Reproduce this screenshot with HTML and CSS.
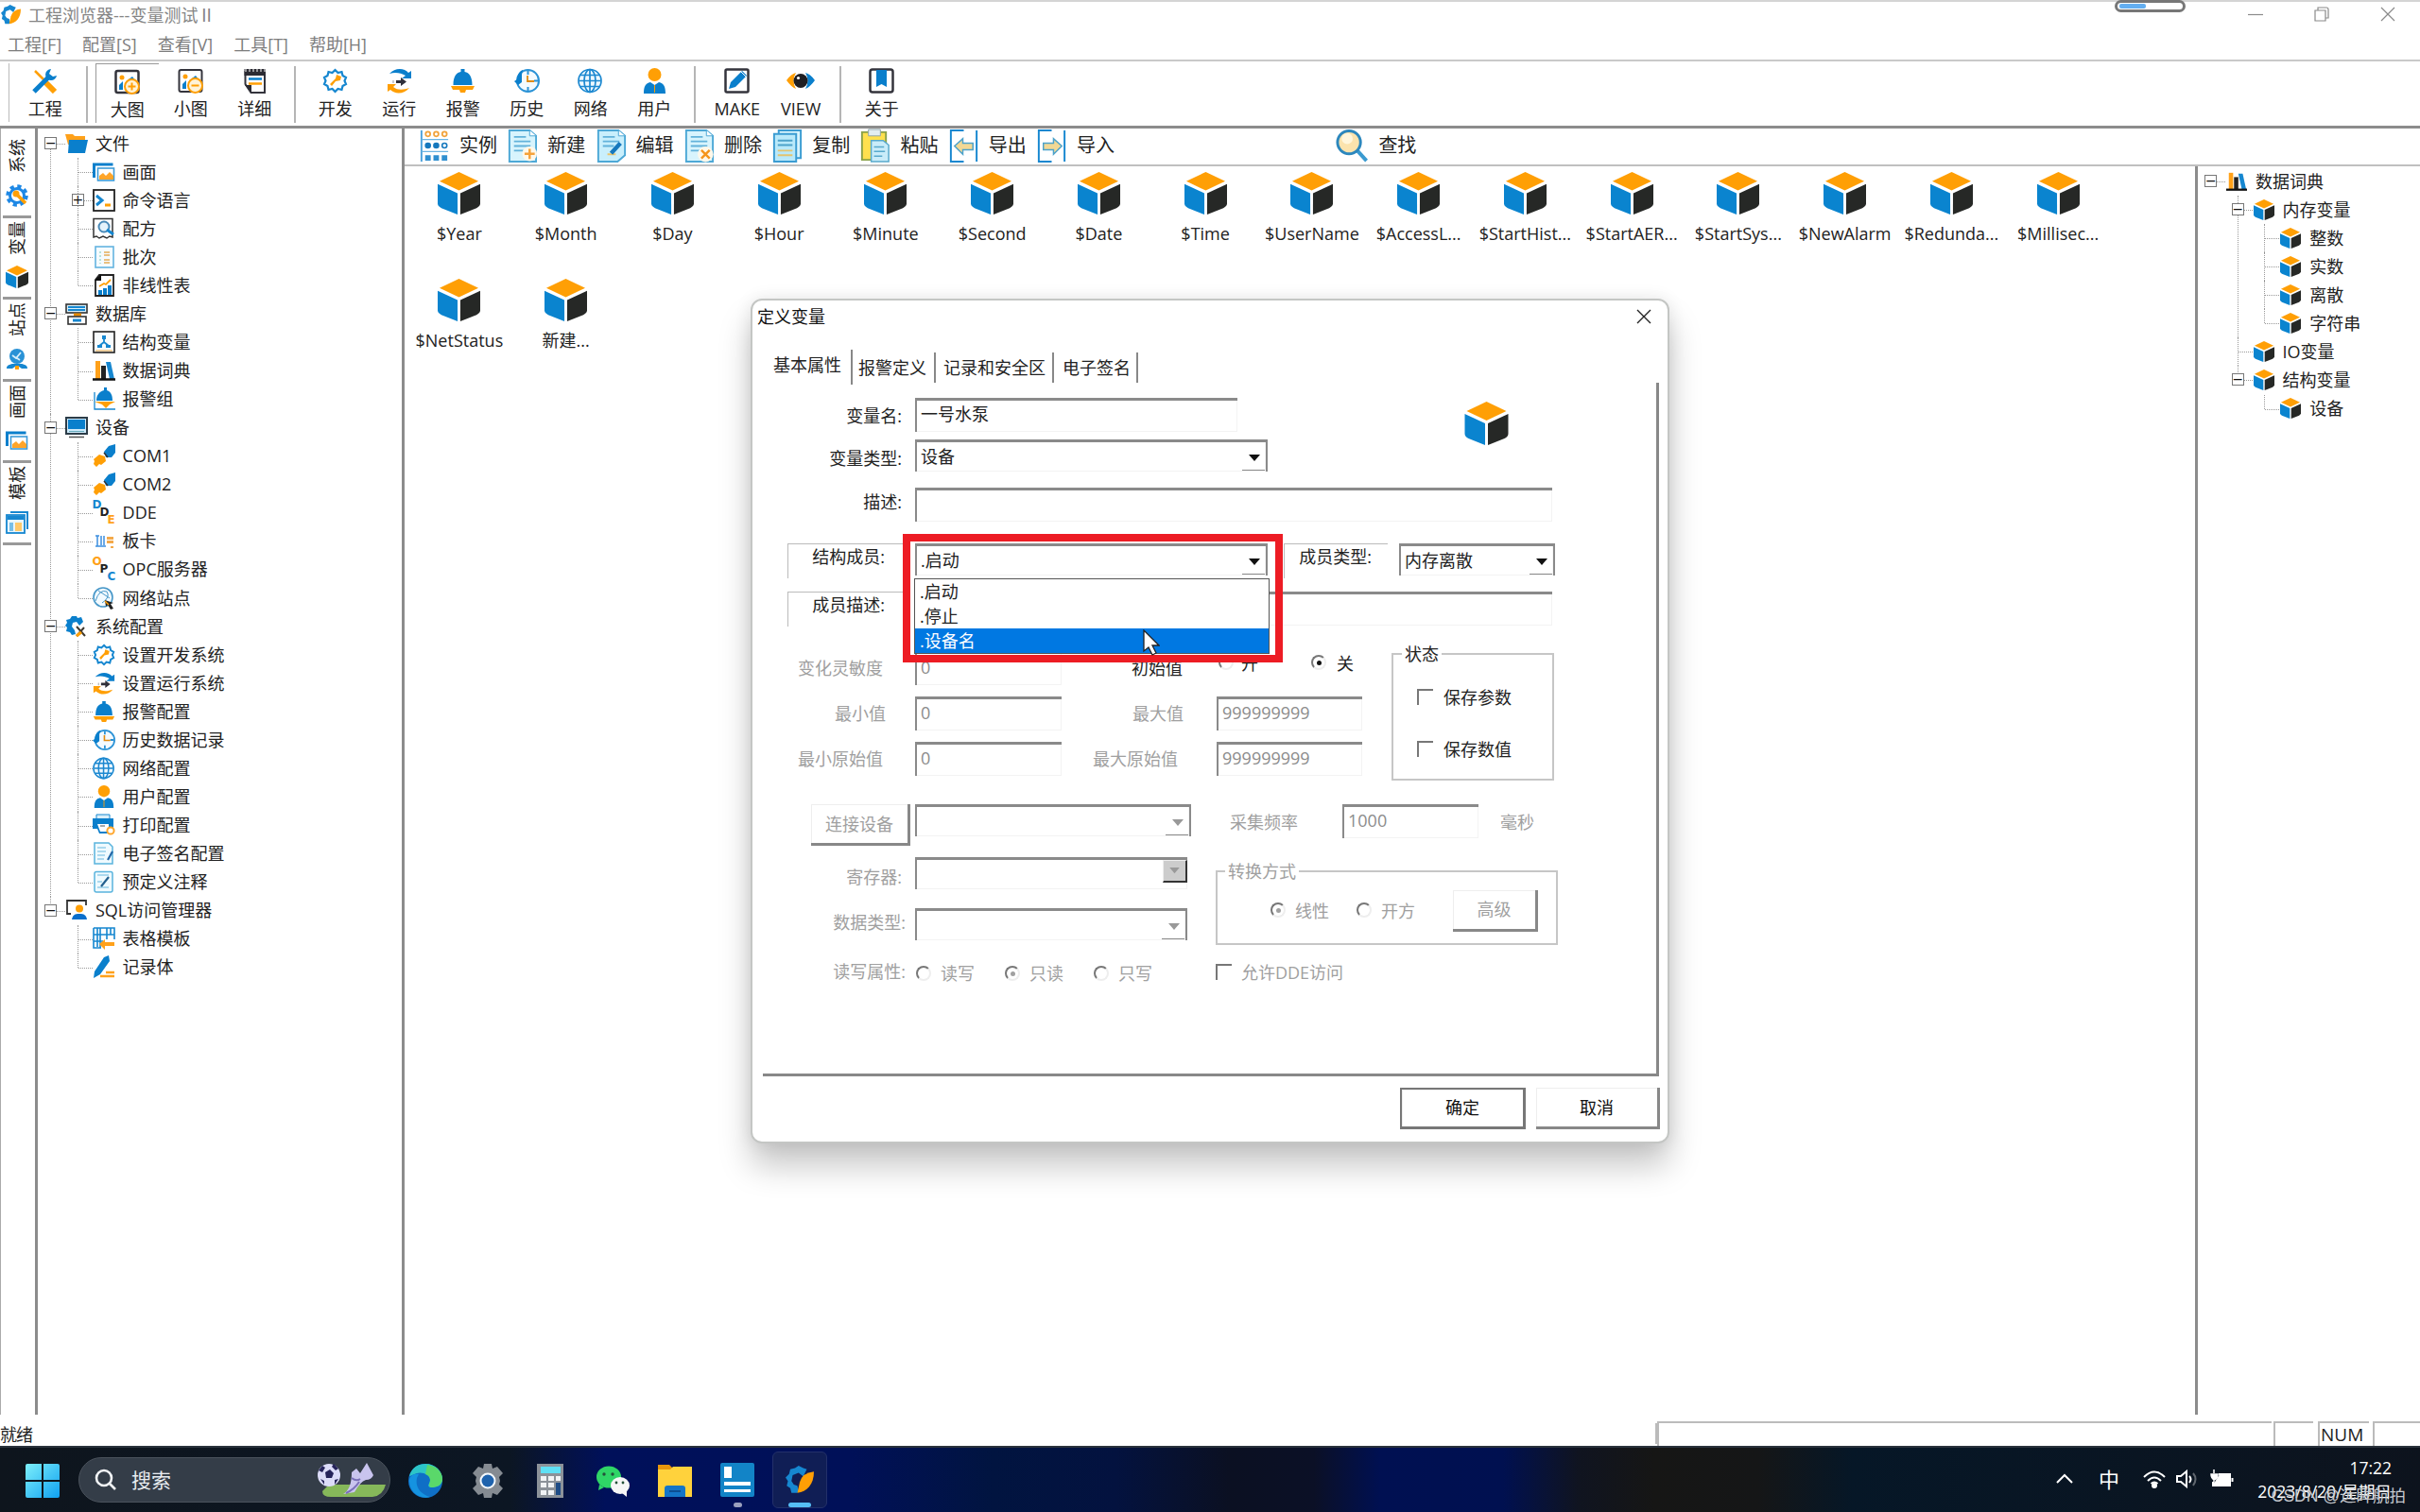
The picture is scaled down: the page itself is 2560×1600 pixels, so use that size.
FILE: index.html
```html
<!DOCTYPE html>
<html lang="zh-CN">
<head>
<meta charset="utf-8">
<title>工程浏览器---变量测试II</title>
<link rel="stylesheet" href="styles.css">
</head>
<body>
<svg class="defs" aria-hidden="true">
  <symbol id="cube" viewBox="0 0 46 46"><path fill="#fff" d="M23 0 46 11V36L23 46 0 36V11Z"/><path fill="#ff9f05" d="M23 0 44 10 23 20 2 10Z"/><path fill="#0a84cf" d="M0 13 21.500 23V46L4 39Q0 37 0 34Z"/><path fill="#262826" d="M46 13 24.500 23V46L42 39Q46 37 46 34Z"/></symbol>
  <symbol id="tools" viewBox="0 0 27 27"><path d="M3 3 13 13" stroke="#ff9f05" stroke-width="2.500"/><path d="M14 15 24 25" stroke="#ff9f05" stroke-width="6"/><path d="M2 25 18 9" stroke="#0a7fcc" stroke-width="5"/><path d="M20 1A6 6 0 1 0 26 8L22 9 18 6Z" fill="#0a7fcc"/></symbol>
  <symbol id="picplus" viewBox="0 0 27 27"><rect x="1.500" y="2" width="24" height="23" rx="2" fill="#fff" stroke="#34343c" stroke-width="2.500"/><circle cx="8" cy="9" r="2.500" fill="#ff9f05"/><path d="M5 22v-5l4-4v9zm10-11 4-3 3 4z" fill="#0a7fcc"/><circle cx="18.500" cy="18.500" r="7.500" fill="#fff3d8" stroke="#ff9f05" stroke-width="2"/><path d="M18.500 14.500v8M14.500 18.500h8" stroke="#ff9f05" stroke-width="2"/></symbol>
  <symbol id="picminus" viewBox="0 0 27 27"><rect x="1.500" y="2" width="24" height="23" rx="2" fill="#fff" stroke="#34343c" stroke-width="2"/><circle cx="8" cy="9" r="2.500" fill="#ff9f05"/><path d="M5 22v-5l4-4v9zm10-11 4-3 3 4z" fill="#0a7fcc"/><circle cx="18.500" cy="18.500" r="7.500" fill="#fff3d8" stroke="#ff9f05" stroke-width="2"/><path d="M14.500 18.500h8" stroke="#ff9f05" stroke-width="2"/></symbol>
  <symbol id="note" viewBox="0 0 27 27"><path d="M3.500 4v13l6 9H24V4z" fill="#fff" stroke="#34343c" stroke-width="2"/><path d="M2.500 1H25v7H2.500zM3 18h7v8z" fill="#2b2b33"/><path d="M4 1v3M8 1v3M12 1v3M16 1v3M20 1v3M24 1v3" stroke="#fff"/><path d="M7 11.500h14" stroke="#0a7fcc" stroke-width="2.500"/><path d="M7 16.500h14" stroke="#ff9f05" stroke-width="2.500"/></symbol>
  <symbol id="gear" viewBox="0 0 27 27"><path d="M13.500 2l3 3 4-1 1 4 3.500 2-1.500 3.500 1.500 3.500-3.500 2-1 4-4-1-3 3-3-3-4 1-1-4L2 17l1.500-3.500L2 10l3.500-2 1-4 4 1z" fill="#fff" stroke="#1687d0" stroke-width="2.200"/><path d="M8 17l6-6 1-4 5 2-1 4-5 1-4 5z" fill="#ff9f05"/></symbol>
  <symbol id="run" viewBox="0 0 27 27"><path d="M3 6C9 -1 19 0 23 5l3-2v8H16l4-3C15 5 9 4 3 6z" fill="#0a7fcc"/><path d="M24 21C18 28 9 28 4 23l-3 2v-8h9l-3 3c5 4 11 3 17 1z" fill="#ff9f05"/><path d="M10 13h5v-3l6 4.500-6 4.500v-3h-5z" fill="#30303a"/><path d="M7 13v3" stroke="#999"/></symbol>
  <symbol id="bell" viewBox="0 0 27 27"><path d="M11.500 4V1h4v3c5 1 8 5 8 14h-20c0-9 3-13 8-14z" fill="#0a7fcc"/><path d="M1 19h25l-2 4h-7l-1 3h-5l-1-3H3z" fill="#ff9f05"/></symbol>
  <symbol id="clock" viewBox="0 0 27 27"><circle cx="14.500" cy="13.500" r="11.500" fill="#f4faff" stroke="#2a92d6" stroke-width="2"/><path d="M14.500 3v4m0 13v4M21 13.500h4" stroke="#2a92d6" stroke-width="2"/><path d="M14 8v6h7" fill="none" stroke="#e08a10" stroke-width="1.800"/><path d="M0 14l3-2C3 7 6 3 9 2l-1 5v8l-4 3z" fill="#0a7fcc"/></symbol>
  <symbol id="globe" viewBox="0 0 27 27"><g fill="none" stroke="#1c88d0" stroke-width="1.700"><circle cx="13" cy="13.500" r="12" fill="#eef8ff"/><ellipse cx="13" cy="13.500" rx="6" ry="12"/><path d="M13 1v25M1.500 13.500h23M3 7.500h20M3 19.500h20"/></g></symbol>
  <symbol id="user" viewBox="0 0 27 27"><circle cx="13.500" cy="7" r="7" fill="#ff9f05"/><path d="M2 27c0-8 2-11 7-12l4.500 3 4.500-3c5 1 7 4 7 12z" fill="#0a7fcc"/><path d="M13.500 18v8" stroke="#ff9f05"/></symbol>
  <symbol id="make" viewBox="0 0 27 27"><rect x="1.500" y="1.500" width="24" height="24" rx="1.500" fill="#fff" stroke="#34343c" stroke-width="2.500"/><path d="M5 22l2-7L19 3l5 5-12 12z" fill="#0a7fcc"/><path d="M18 4l5 5" stroke="#fff"/></symbol>
  <symbol id="eye" viewBox="0 0 30 27"><path d="M0 13Q5 6 10 5 5 13 10 22 5 20 0 13z" fill="#ff9f05"/><path d="M30 13Q25 6 20 5q5 8 0 17 5-2 10-9z" fill="#0a7fcc"/><circle cx="15" cy="13.500" r="7.500" fill="#1e1e22"/><circle cx="12.500" cy="10.500" r="1.600" fill="#fff"/></symbol>
  <symbol id="about" viewBox="0 0 27 27"><rect x="1.500" y="1.500" width="24" height="24" rx="2.500" fill="#fff" stroke="#34343c" stroke-width="2.500"/><path d="M8 2h11v18l-5.500-3L8 20z" fill="#0a7fcc"/></symbol>
  <symbol id="folder" viewBox="0 0 24 24"><path d="M0 2h8l2 2h11v9H3z" fill="#ffa11a"/><path d="M4 8h20l-3 14H3z" fill="#0a7fcc"/></symbol>
  <symbol id="pics" viewBox="0 0 24 24"><path d="M1.500 18V4h20" fill="none" stroke="#0a7fcc" stroke-width="3"/><rect x="5.500" y="8" width="17" height="13" fill="#fff" stroke="#3c9bd8" stroke-width="1.600"/><path d="M7 20v-4l4-3 3 3 4-4 4 4v4z" fill="#ffa52a"/></symbol>
  <symbol id="cmd" viewBox="0 0 24 24"><rect x="1" y="1" width="22" height="22" fill="#fff" stroke="#222" stroke-width="1.800"/><path d="M4 7l6 5-6 5" fill="none" stroke="#1687d0" stroke-width="3"/><path d="M13 17h6" stroke="#ff9f05" stroke-width="3"/></symbol>
  <symbol id="recipe" viewBox="0 0 24 24"><path d="M1 1.500h20V21l-3-1-3 2-4-2-4 2-3-2-3 1z" fill="#fff" stroke="#333" stroke-width="1.500"/><circle cx="12" cy="10" r="5.500" fill="#e4f2fb" stroke="#4a8ab8" stroke-width="2"/><path d="M15 13l7 5" stroke="#1687d0" stroke-width="3"/></symbol>
  <symbol id="batch" viewBox="0 0 24 24"><rect x="3" y="1" width="19" height="22" fill="#f5fbff" stroke="#64b4e0" stroke-width="1.600"/><path d="M12 7h6M12 10h6M12 15h6M12 18h6" stroke="#e9c080" stroke-width="2"/><path d="M8 6v13" stroke="#7cb" stroke-dasharray="2 2"/></symbol>
  <symbol id="chart" viewBox="0 0 24 24"><path d="M7 1h15v22H3V6z" fill="#fff" stroke="#222" stroke-width="1.800"/><path d="M2 7l7-7v7z" fill="#111"/><path d="M6 22v-5h4v5zm5 0v-7h4v7zm5 0V12h4v10z" fill="#0a7fcc"/><path d="M7 13l5-3 2 1 5-5" fill="none" stroke="#ff9f05" stroke-width="1.800"/></symbol>
  <symbol id="db" viewBox="0 0 24 24"><rect x="1" y="2" width="22" height="9" fill="#d9f0fb" stroke="#333" stroke-width="1.600"/><path d="M3 5h18M3 8h18" stroke="#1687d0" stroke-width="2"/><path d="M9 13h8" stroke="#e58a00" stroke-width="3"/><rect x="3" y="15" width="19" height="8" fill="#fff" stroke="#333" stroke-width="1.600"/><path d="M8 19h9" stroke="#1687d0" stroke-width="3"/></symbol>
  <symbol id="struct" viewBox="0 0 24 24"><rect x="1" y="1" width="22" height="22" fill="#f7fbfd" stroke="#222" stroke-width="1.600"/><path d="M12 6v7M12 12l-5 4M12 12l5 4" stroke="#1687d0" stroke-width="1.800"/><path d="M10 5h4v4h-4zM5 15h5v3H5zm9 0h5v3h-5z" fill="#1687d0"/><path d="M3 21h18" stroke="#e8a542"/></symbol>
  <symbol id="books" viewBox="0 0 24 24"><path d="M3 2h5v19H3z" fill="#ffa11a"/><path d="M9 7h5v14H9z" fill="#222"/><path d="M14 3h5l4 18h-5z" fill="#1687d0"/><path d="M0 21.500h24" stroke="#111" stroke-width="2.500"/></symbol>
  <symbol id="bellgrp" viewBox="0 0 24 24"><path d="M2 5v18h22" fill="none" stroke="#1687d0" stroke-width="1.300"/><path d="M12 0h3v3c5 2 6 6 6 11H4C4 9 6 5 12 3z" fill="#0a7fcc"/><path d="M2 15h22l-6 3-4 4-4-4z" fill="#ff9f05"/></symbol>
  <symbol id="monitor" viewBox="0 0 24 24"><rect x="1" y="2" width="22" height="17" fill="#cfeafa" stroke="#2c3c48" stroke-width="2"/><path d="M3 4h18v10H3z" fill="#0a7fcc"/><path d="M4 16.500h16" stroke="#6ab" /><path d="M4 22.500h16" stroke="#555" stroke-width="1.500"/></symbol>
  <symbol id="com" viewBox="0 0 24 24"><path d="M12 8l5-6 7-2v9l-4 5-6 0z" fill="#0a7fcc"/><path d="M1 16l6-5 6 2 1 5-5 4-2-1-3 3-3-3 1-3z" fill="#ff9f05"/><path d="M12 9l4 5" stroke="#333" stroke-width="1.500"/></symbol>
  <symbol id="card" viewBox="0 0 24 24"><path d="M3 7h4M5 7v11M9 7v10M12 7v10M3 18h11" stroke="#3d8fe0" stroke-width="1.500"/><path d="M15 8h7v3h-7zM15 12h7v3h-7zM19 18h3v2h-3z" fill="#f4a94a"/></symbol>
  <symbol id="site" viewBox="0 0 24 24"><circle cx="11" cy="11" r="10" fill="#f2faff" stroke="#4797c8" stroke-width="1.600"/><path d="M3 15Q7 2 15 5q4 6-5 12M6 4l12 8" fill="none" stroke="#4797c8"/><path d="M13 14l9 3-3 1 3 5-3 1-3-5-2 2z" fill="#222"/><path d="M13 15l4 4" stroke="#ff9f05" stroke-width="1.500"/></symbol>
  <symbol id="syscfg" viewBox="0 0 24 24"><path d="M7 1h5l1 2 4-1 2 5-2 2-2 2-3-4-4 1-1 4 3 4 1 4-4 1-2-3-4-1 1-4-2-2 2-3-1-3 4-1z" fill="#0a7fcc"/><path d="M12 12l9 10M20 13l-8 9" stroke="#403a30" stroke-width="2"/><path d="M17 18l-5 4" stroke="#ff9f05" stroke-width="3"/></symbol>
  <symbol id="printer" viewBox="0 0 24 24"><path d="M4 1h14v5H4z" fill="#d9eefa" stroke="#1687d0"/><path d="M0 5h22v11h-4l-2 5H7l-2-5H0z" fill="#0a7fcc"/><path d="M5 11h12v5l-2 3H8z" fill="#fff"/><path d="M8 13h5" stroke="#555"/><circle cx="19" cy="18" r="3.600" fill="#fff" stroke="#ffa52a" stroke-width="2"/></symbol>
  <symbol id="sign" viewBox="0 0 24 24"><path d="M2 1h15l4 4v18H2z" fill="#effaff" stroke="#5ab4dd" stroke-width="1.500"/><path d="M5 6h9M5 10h9M5 14h8M5 18h7" stroke="#68b8dd"/><path d="M16 19l5-9" stroke="#2468a8" stroke-width="2.200"/></symbol>
  <symbol id="annot" viewBox="0 0 24 24"><rect x="2" y="1.500" width="19" height="21.500" rx="2" fill="#effaff" stroke="#5ab4dd" stroke-width="1.500"/><path d="M5 5h12M5 18h12M5 12h5" stroke="#68b8dd"/><path d="M9 17l8-10" stroke="#23608f" stroke-width="2.200"/></symbol>
  <symbol id="sql" viewBox="0 0 24 24"><path d="M6 16H2V2h20v5" fill="none" stroke="#333" stroke-width="1.800"/><circle cx="15" cy="10.500" r="4" fill="#ff9f05"/><path d="M7 22c1-5 3-6 8-6s7 1 8 6z" fill="#0a6fcc"/></symbol>
  <symbol id="tabletpl" viewBox="0 0 24 24"><path d="M1 1h22v12M1 1v21h8M1 8h22M1 15h10M8 1v21M15 1v12M5 1v20M19 1v7" fill="none" stroke="#1687d0" stroke-width="1.600"/><path d="M7 18l6-5v3h10v4H13v4z" fill="#ffa11a"/></symbol>
  <symbol id="record" viewBox="0 0 24 24"><path d="M2 17L12 2l5-2 1 6L8 20l-7 4z" fill="#0a7fcc"/><path d="M8 22h15M14 18h9" stroke="#ffa11a" stroke-width="2.500"/></symbol>
  <symbol id="gearblue" viewBox="0 0 24 24"><circle cx="12" cy="12" r="9.500" fill="none" stroke="#1e88e5" stroke-width="4.500" stroke-dasharray="4 3.460"/><circle cx="12" cy="12" r="7.500" fill="#fff" stroke="#1e88e5" stroke-width="3"/><path d="M12 11l9 9" stroke="#ff9f05" stroke-width="3.500"/><circle cx="11" cy="10" r="3.500" fill="#ff9f05"/></symbol>
  <symbol id="station" viewBox="0 0 24 24"><circle cx="12" cy="9" r="8" fill="#2a92d6"/><path d="M7 8l4 3 5-6M12 11l3 2" stroke="#d8effc" stroke-width="1.800" fill="none"/><path d="M1 22c0-4 3-4 6-5h10c3 1 6 1 6 5h-6l-3-2h-4l-3 2z" fill="#1687d0"/><path d="M10 19h4v4h-4z" fill="#ff9f05"/></symbol>
  <symbol id="template" viewBox="0 0 24 24"><path d="M5 1h18v18" fill="none" stroke="#1687d0" stroke-width="2"/><rect x="1" y="4" width="19" height="19" fill="#e8f6fd" stroke="#1687d0" stroke-width="1.800"/><path d="M2 5h17v4H2z" fill="#1687d0"/><path d="M4 12h4v9H4z" fill="#78bfe8"/><path d="M10 12h7v9h-7z" fill="#ffc96b"/></symbol>
  <symbol id="inst" viewBox="0 0 32 38"><path d="M2 2v34" stroke="#4da2dc" stroke-width="2"/><g fill="#fff" stroke="#f2a33c" stroke-width="1.800"><circle cx="9" cy="6" r="2.500"/><circle cx="18" cy="6" r="2.500"/><circle cx="27" cy="6" r="2.500"/></g><path d="M2 12h29M2 25h29" stroke="#6cb4e2" stroke-width="1.300"/><g fill="#1678bd"><circle cx="9" cy="18.500" r="3.400"/><circle cx="18" cy="18.500" r="3.400"/></g><circle cx="27" cy="18.500" r="2.600" fill="#fff" stroke="#1678bd" stroke-width="1.600"/><path d="M6 29h6v6H6zm9 0h6v6h-6zm9 0h6v6h-6z" fill="#2f8fd0"/></symbol>
  <symbol id="doc" viewBox="0 0 32 38"><path d="M2 2h22l7 6v28H2z" fill="#d8f4fd" stroke="#4da8d6" stroke-width="2"/><path d="M24 2v6h7" fill="#fff" stroke="#4da8d6"/><path d="M7 9h13M7 14h18M7 19h18M7 24h10" stroke="#62b2da" stroke-width="1.800"/></symbol>
  <symbol id="new" viewBox="0 0 32 38"><use href="#doc"/><circle cx="24" cy="27.500" r="8" fill="#fff8ea"/><path d="M24 22v11M18.500 27.500h11" stroke="#f5a23a" stroke-width="2.500"/></symbol>
  <symbol id="edit" viewBox="0 0 32 38"><path d="M2 2h22l7 6v21l-8 7H2z" fill="#c9effc" stroke="#4da8d6" stroke-width="2"/><path d="M24 2v6h7" fill="#fff" stroke="#4da8d6"/><path d="M7 9h13M7 14h18M7 19h12" stroke="#62b2da" stroke-width="1.800"/><path d="M12 28h9" stroke="#ecc46a" stroke-width="2"/><path d="M16 27l10-11" stroke="#1678bd" stroke-width="4.500"/></symbol>
  <symbol id="del" viewBox="0 0 32 38"><use href="#doc"/><circle cx="23" cy="28" r="8.500" fill="#fff8ea"/><path d="M18.500 23.500l9 9M27.500 23.500l-9 9" stroke="#f5941a" stroke-width="2.500"/></symbol>
  <symbol id="copy" viewBox="0 0 32 38"><path d="M7 2h24v30H7z" fill="#d8f4fd" stroke="#3b9cd2" stroke-width="2"/><path d="M2 6h24v30H2z" fill="#b9e9fa" stroke="#3b9cd2" stroke-width="2"/><path d="M6 13h16M6 18h16" stroke="#4da2ca" stroke-width="2"/><path d="M6 24h16M6 29h16" stroke="#e3c46f" stroke-width="2"/></symbol>
  <symbol id="paste" viewBox="0 0 32 38"><path d="M2 4h26v30H2z" fill="#ffe04e" stroke="#8ba24a" stroke-width="2"/><path d="M9 1h13v7H9z" fill="#e2edf2" stroke="#8fa5ab"/><path d="M12 13h13l6 5v18H12z" fill="#c9ecf9" stroke="#58a9cc" stroke-width="1.500"/><path d="M15 20h11M15 25h12M15 30h9" stroke="#58a9cc" stroke-width="1.500"/></symbol>
  <symbol id="export" viewBox="0 0 32 38"><path d="M16 2H2v34h14M30 2v34" fill="none" stroke="#1687d0" stroke-width="2"/><path d="M6 19l9-8v5h11v7H15v5z" fill="#f2d894" stroke="#4da2ca" stroke-width="1.500"/></symbol>
  <symbol id="import" viewBox="0 0 32 38"><path d="M16 2H2v34h14M30 2v34" fill="none" stroke="#1687d0" stroke-width="2"/><path d="M27 19l-9-8v5H7v7h11v5z" fill="#f2d894" stroke="#4da2ca" stroke-width="1.500"/></symbol>
  <symbol id="find" viewBox="0 0 36 38"><path d="M24 24l10 11" stroke="#3a9ad0" stroke-width="4"/><circle cx="15" cy="15" r="12.500" fill="#fbe3ad" stroke="#2c87bd" stroke-width="3"/><circle cx="13" cy="11" r="6" fill="#fff6dc"/></symbol>
  <symbol id="logo" viewBox="0 0 24 24"><path d="M11 21l-1 2H5l-1-4-3-2 1-4-2-3 3-3 1-4 4-1 3-2 4 2 3 1-3 6-4-3-5 2-1 5 2 3 3 1z" fill="#1687d0"/><path d="M24 5Q14 6 12 14l-2 9c8-1 14-7 14-18z" fill="#ff9f05"/></symbol>
  <symbol id="tri" viewBox="0 0 12 8"><path d="M0 0h12L6 7z" fill="currentColor"/></symbol>
</svg>

<div class="app">
  <header class="titlebar">
    <svg class="title-icon"><use href="#logo"/></svg>
    <span class="title-text">工程浏览器---变量测试<span class="numeral">Ⅱ</span></span>
    <div class="window-buttons">
      <svg viewBox="0 0 16 16"><path d="M0 8.500h16"/></svg>
      <svg viewBox="0 0 16 16"><path d="M1 4h11v11H1zM4 4V1h9q2 0 2 2v9h-3"/></svg>
      <svg viewBox="0 0 16 16"><path d="M1 1l14 14M15 1L1 15"/></svg>
    </div>
    <div class="progress"><i></i></div>
  </header>
  <nav class="menu"><span>工程[F]</span><span>配置[S]</span><span>查看[V]</span><span>工具[T]</span><span>帮助[H]</span></nav>
  <div class="toolbar">
    <i class="grip"></i>
    <div class="tool first"><svg><use href="#tools"/></svg>工程</div>
    <i class="sep s1"></i>
    <div class="tool on"><svg><use href="#picplus"/></svg>大图</div>
    <div class="tool"><svg><use href="#picminus"/></svg>小图</div>
    <div class="tool"><svg><use href="#note"/></svg>详细</div>
    <i class="sep s2"></i>
    <div class="tool"><svg><use href="#gear"/></svg>开发</div>
    <div class="tool"><svg><use href="#run"/></svg>运行</div>
    <div class="tool"><svg><use href="#bell"/></svg>报警</div>
    <div class="tool"><svg><use href="#clock"/></svg>历史</div>
    <div class="tool"><svg><use href="#globe"/></svg>网络</div>
    <div class="tool"><svg><use href="#user"/></svg>用户</div>
    <i class="sep s3"></i>
    <div class="tool"><svg><use href="#make"/></svg>MAKE</div>
    <div class="tool"><svg class="wide"><use href="#eye"/></svg>VIEW</div>
    <i class="sep s4"></i>
    <div class="tool"><svg><use href="#about"/></svg>关于</div>
  </div>

  <main class="body">
    <aside class="side-tabs">
      <div class="side-tab"><span>系统</span><svg><use href="#gearblue"/></svg></div>
      <div class="side-tab"><span>变量</span><svg><use href="#cube"/></svg></div>
      <div class="side-tab"><span>站点</span><svg><use href="#station"/></svg></div>
      <div class="side-tab"><span>画面</span><svg><use href="#pics"/></svg></div>
      <div class="side-tab"><span>模板</span><svg><use href="#template"/></svg></div>
    </aside>

    <section class="tree-panel">
      <ul class="tree">
        <li><div class="row"><i class="box">−</i><svg><use href="#folder"/></svg>文件</div>
          <ul>
            <li><div class="row"><svg><use href="#pics"/></svg>画面</div></li>
            <li><div class="row"><i class="box">+</i><svg><use href="#cmd"/></svg>命令语言</div></li>
            <li><div class="row"><svg><use href="#recipe"/></svg>配方</div></li>
            <li><div class="row"><svg><use href="#batch"/></svg>批次</div></li>
            <li><div class="row"><svg><use href="#chart"/></svg>非线性表</div></li>
          </ul></li>
        <li><div class="row"><i class="box">−</i><svg><use href="#db"/></svg>数据库</div>
          <ul>
            <li><div class="row"><svg><use href="#struct"/></svg>结构变量</div></li>
            <li><div class="row"><svg><use href="#books"/></svg>数据词典</div></li>
            <li><div class="row"><svg><use href="#bellgrp"/></svg>报警组</div></li>
          </ul></li>
        <li><div class="row"><i class="box">−</i><svg><use href="#monitor"/></svg>设备</div>
          <ul>
            <li><div class="row"><svg><use href="#com"/></svg>COM1</div></li>
            <li><div class="row"><svg><use href="#com"/></svg>COM2</div></li>
            <li><div class="row"><span class="letters"><b class="c-blue">D</b><b>D</b><b class="c-orange">E</b></span>DDE</div></li>
            <li><div class="row"><svg><use href="#card"/></svg>板卡</div></li>
            <li><div class="row"><span class="letters"><b class="c-orange">O</b><b>P</b><b class="c-blue">C</b></span>OPC服务器</div></li>
            <li><div class="row"><svg><use href="#site"/></svg>网络站点</div></li>
          </ul></li>
        <li><div class="row"><i class="box">−</i><svg><use href="#syscfg"/></svg>系统配置</div>
          <ul>
            <li><div class="row"><svg><use href="#gear"/></svg>设置开发系统</div></li>
            <li><div class="row"><svg><use href="#run"/></svg>设置运行系统</div></li>
            <li><div class="row"><svg><use href="#bell"/></svg>报警配置</div></li>
            <li><div class="row"><svg><use href="#clock"/></svg>历史数据记录</div></li>
            <li><div class="row"><svg><use href="#globe"/></svg>网络配置</div></li>
            <li><div class="row"><svg><use href="#user"/></svg>用户配置</div></li>
            <li><div class="row"><svg><use href="#printer"/></svg>打印配置</div></li>
            <li><div class="row"><svg><use href="#sign"/></svg>电子签名配置</div></li>
            <li><div class="row"><svg><use href="#annot"/></svg>预定义注释</div></li>
          </ul></li>
        <li><div class="row"><i class="box">−</i><svg><use href="#sql"/></svg>SQL访问管理器</div>
          <ul>
            <li><div class="row"><svg><use href="#tabletpl"/></svg>表格模板</div></li>
            <li><div class="row"><svg><use href="#record"/></svg>记录体</div></li>
          </ul></li>
      </ul>
    </section>

    <section class="workspace">
      <div class="actions">
        <div class="action"><svg><use href="#inst"/></svg>实例</div>
        <div class="action"><svg><use href="#new"/></svg>新建</div>
        <div class="action"><svg><use href="#edit"/></svg>编辑</div>
        <div class="action"><svg><use href="#del"/></svg>删除</div>
        <div class="action"><svg><use href="#copy"/></svg>复制</div>
        <div class="action"><svg><use href="#paste"/></svg>粘贴</div>
        <div class="action"><svg><use href="#export"/></svg>导出</div>
        <div class="action"><svg><use href="#import"/></svg>导入</div>
        <div class="action search"><svg><use href="#find"/></svg>查找</div>
      </div>
      <div class="panes">
        <div class="variables">
          <div class="var"><svg><use href="#cube"/></svg>$Year</div>
          <div class="var"><svg><use href="#cube"/></svg>$Month</div>
          <div class="var"><svg><use href="#cube"/></svg>$Day</div>
          <div class="var"><svg><use href="#cube"/></svg>$Hour</div>
          <div class="var"><svg><use href="#cube"/></svg>$Minute</div>
          <div class="var"><svg><use href="#cube"/></svg>$Second</div>
          <div class="var"><svg><use href="#cube"/></svg>$Date</div>
          <div class="var"><svg><use href="#cube"/></svg>$Time</div>
          <div class="var"><svg><use href="#cube"/></svg>$UserName</div>
          <div class="var"><svg><use href="#cube"/></svg>$AccessL...</div>
          <div class="var"><svg><use href="#cube"/></svg>$StartHist...</div>
          <div class="var"><svg><use href="#cube"/></svg>$StartAER...</div>
          <div class="var"><svg><use href="#cube"/></svg>$StartSys...</div>
          <div class="var"><svg><use href="#cube"/></svg>$NewAlarm</div>
          <div class="var"><svg><use href="#cube"/></svg>$Redunda...</div>
          <div class="var"><svg><use href="#cube"/></svg>$Millisec...</div>
          <div class="var"><svg><use href="#cube"/></svg>$NetStatus</div>
          <div class="var"><svg><use href="#cube"/></svg>新建...</div>
        </div>
        <aside class="dictionary">
          <ul class="tree">
            <li><div class="row"><i class="box">−</i><svg><use href="#books"/></svg>数据词典</div>
              <ul>
                <li><div class="row"><i class="box">−</i><svg><use href="#cube"/></svg>内存变量</div>
                  <ul>
                    <li><div class="row"><svg><use href="#cube"/></svg>整数</div></li>
                    <li><div class="row"><svg><use href="#cube"/></svg>实数</div></li>
                    <li><div class="row"><svg><use href="#cube"/></svg>离散</div></li>
                    <li><div class="row"><svg><use href="#cube"/></svg>字符串</div></li>
                  </ul></li>
                <li><div class="row"><svg><use href="#cube"/></svg>IO变量</div></li>
                <li><div class="row"><i class="box">−</i><svg><use href="#cube"/></svg>结构变量</div>
                  <ul><li><div class="row"><svg><use href="#cube"/></svg>设备</div></li></ul></li>
              </ul></li>
          </ul>
        </aside>
      </div>
    </section>
  </main>

  <footer class="status"><span class="ready">就绪</span><span class="cell c1"></span><span class="cell c2"></span><span class="cell c3">NUM</span><span class="cell c4"></span></footer>

  <footer class="taskbar">
    <svg class="start" viewBox="0 0 36 36"><defs><linearGradient id="w" x2="1" y2="1"><stop stop-color="#7df0fb"/><stop offset="1" stop-color="#0fa0f0"/></linearGradient></defs><path fill="url(#w)" d="M0 2q0-2 2-2h15v17H0zM19 0h15q2 0 2 2v15H19zM0 19h17v17H2q-2 0-2-2zM19 19h17v15q0 2-2 2H19z"/></svg>
    <div class="searchbox">
      <svg class="mag" viewBox="0 0 24 24"><circle cx="10" cy="10" r="8" fill="none" stroke="#f0f2f4" stroke-width="2.600"/><path d="M16 16l6 6" stroke="#f0f2f4" stroke-width="2.600"/></svg>
      <span>搜索</span>
      <svg class="doodle" viewBox="0 0 72 36"><path d="M12 23h60q-3 12-14 13H14q-9 0-9-6z" fill="#86b85a"/><circle cx="12" cy="13" r="12" fill="#dcdcf8"/><path d="M8 10l5-3 4 4-2 5H9zM1 8l4-5 3 2-3 5zm16-7l5 5-3 2-4-4zM3 17l4 2v4zm15 1l4-1-4 6z" fill="#26245a"/><path d="M27 33Q36 28 36 10l5-4 4 5 7-11 7 13q-2 5-8 5-6 2-12 13z" fill="#c9c4ee"/><path d="M36 16q5 4 9 1M30 32q9-4 14-12" fill="none" stroke="#7a70b8" stroke-width="2"/></svg>
    </div>
    <svg class="app-ic" viewBox="0 0 36 36"><circle cx="18" cy="18" r="18" fill="#0f6fc6"/><path d="M1 13C4 3 11 0 18 0c11 0 18 8 18 16 0 7-6 9-13 9-4-2 0-4 0-8 0-6-9-9-14-7-4 1-7 3-8 3z" fill="#2cc5c8"/><path d="M20 1c12 2 16 9 16 16-1 6-6 8-12 8-4-2-1-4-1-8 0-3-2-5-5-6z" fill="#5ad86a"/><path d="M9 15c-2 10 4 17 14 20-11 3-22-5-22-17 0-4 4-8 10-7z" fill="#1593e0"/></svg>
    <svg class="app-ic" viewBox="0 0 36 36"><path d="M14 0h8l1 5 5-2 6 7-4 4 1 4-1 4 4 4-6 7-5-2-1 5h-8l-1-5-5 2-6-7 4-4-1-4 1-4-4-4 6-7 5 2z" fill="#858b92"/><circle cx="18" cy="18" r="8.500" fill="#f4f8fc"/><circle cx="18" cy="18" r="6.500" fill="#1f63ad"/></svg>
    <svg class="app-ic" viewBox="0 0 36 36"><path d="M4 0h28v36H4z" fill="#8c9299"/><path d="M8 3h21v7H8z" fill="#5fe0f5"/><path d="M8 13h6v5H8zm8 0h6v5h-6zm8 0h5v5h-5zM8 20h6v5H8zm8 0h6v5h-6zM8 28h6v5H8zm8 0h6v5h-6z" fill="#f1f3f5"/><path d="M24 20h5v13h-5z" fill="#1e4c86"/></svg>
    <svg class="app-ic" viewBox="0 0 36 36"><ellipse cx="14" cy="14" rx="13" ry="11.500" fill="#2fd566"/><path d="M4 22l-1 6 6-3z" fill="#2fd566"/><ellipse cx="26" cy="23" rx="10" ry="9" fill="#f6f6f6"/><path d="M28 31l5 4v-6z" fill="#f6f6f6"/><g fill="#24513a"><circle cx="9" cy="11" r="1.700"/><circle cx="18" cy="11" r="1.700"/><circle cx="22" cy="20" r="1.400"/><circle cx="29" cy="20" r="1.400"/></g></svg>
    <svg class="app-ic" viewBox="0 0 36 36"><path d="M0 1h12l4 4h20v10H0z" fill="#e8960c"/><path d="M0 6h13l3-3h20v32H0z" fill="#ffd23c"/><path d="M7 35V26q0-3 3-3h16q3 0 3 3v9z" fill="#1475c8"/><path d="M12 29h12" stroke="#0c4e92" stroke-width="2"/></svg>
    <div class="running"><svg viewBox="0 0 36 36"><rect width="36" height="36" rx="2" fill="#1284c7"/><path d="M4 4h8v12H4zM4 20h28v4H4zM4 28h28v3H4z" fill="#fff"/></svg></div>
    <div class="active-app"><svg viewBox="0 0 24 24"><use href="#logo"/></svg></div>
    <div class="tray">
      <svg class="t-up" viewBox="0 0 18 12"><path d="M1 10l8-8 8 8"/></svg>
      <span class="ime">中</span>
      <svg class="t-wifi" viewBox="0 0 24 20"><path d="M1 8Q12-3 23 8M5 12q7-7 14 0M8.500 15q3.500-3 7 0"/><circle cx="12" cy="17" r="2" fill="#fff"/></svg>
      <svg class="t-vol" viewBox="0 0 24 20"><path d="M1 7h4l6-5v16l-6-5H1zM14 7q3 3 0 7"/><path d="M18 4q5 6 0 13" opacity=".35"/></svg>
      <svg class="t-bat" viewBox="0 0 26 20"><path d="M9 5h12v12H3v-4"/><path d="M10 7h9v8H5z" fill="#fff"/><path d="M23.500 9v4"/><path d="M4 0v4M1 5h7q0 5-4 6-3-2-3-6zM4 10v6" fill="#fff" stroke-width="1.500"/></svg>
      <div class="clock"><span>17:22</span><span>2023/8/20/星期日</span></div>
    </div>
    <span class="watermark">CSDN @远眸航拍</span>
  </footer>
</div>

<div class="dialog">
  <div class="dlg-title">定义变量<svg viewBox="0 0 16 16"><path d="M1 1l14 14M15 1L1 15"/></svg></div>
  <div class="dlg-tabs"><span class="active">基本属性</span><span>报警定义</span><span>记录和安全区</span><span>电子签名</span></div>
  <div class="page">
    <div class="line l-name"><label>变量名:</label><div class="field w341">一号水泵</div><svg class="big-cube"><use href="#cube"/></svg></div>
    <div class="line l-type"><label>变量类型:</label><div class="field combo w373">设备<svg><use href="#tri"/></svg></div></div>
    <div class="line l-desc"><label>描述:</label><div class="field w674"></div></div>
    <div class="line l-member">
      <div class="frame-label">结构成员:</div>
      <div class="picker">
        <div class="field combo w373">.启动<svg><use href="#tri"/></svg></div>
        <div class="dropdown"><div>.启动</div><div>.停止</div><div class="hot">.设备名</div></div>
        <div class="highlight"></div>
        <svg class="cursor" viewBox="0 0 18 28"><path d="M1 1v22l5-4 4 8 4-2-4-8h7z" fill="#fff" stroke="#222" stroke-width="1.300"/></svg>
      </div>
      <div class="frame-label second">成员类型:</div>
      <div class="field combo w165">内存离散<svg><use href="#tri"/></svg></div>
    </div>
    <div class="line l-memdesc"><div class="frame-label">成员描述:</div><div class="field w674"></div></div>
    <div class="ranges">
      <div class="range-lines">
        <div class="line dim"><label class="wide-label">变化灵敏度</label><div class="field w155">0</div>
          <span class="init">初始值</span><i class="radio open"></i><span class="opt-open">开</span><i class="radio checked close"></i><span class="opt-close">关</span></div>
        <div class="line dim"><label class="wide-label l4">最小值</label><div class="field w155">0</div><label class="max-label m3">最大值</label><div class="field w154">999999999</div></div>
        <div class="line dim"><label class="wide-label">最小原始值</label><div class="field w155">0</div><label class="max-label">最大原始值</label><div class="field w154">999999999</div></div>
      </div>
      <fieldset class="state"><legend>状态</legend><div><i class="check"></i>保存参数</div><div><i class="check"></i>保存数值</div></fieldset>
    </div>
    <div class="line dim l-connect">
      <div class="button connect">连接设备</div><div class="field combo w292"><svg><use href="#tri"/></svg></div>
      <span class="freq">采集频率</span><div class="field w144">1000</div><span class="ms">毫秒</span>
    </div>
    <div class="lower">
      <div class="regs">
        <div class="line dim l-reg"><label>寄存器:</label><div class="field w288 has-btn"><b class="drop-btn"><svg><use href="#tri"/></svg></b></div></div>
        <div class="line dim l-data"><label class="nudge">数据类型:</label><div class="field combo w288"><svg><use href="#tri"/></svg></div></div>
      </div>
      <fieldset class="convert"><legend>转换方式</legend><i class="radio checked"></i><span>线性</span><i class="radio"></i><span>开方</span><div class="button adv">高级</div></fieldset>
    </div>
    <div class="line dim l-rw"><label class="nudge">读写属性:</label>
      <div class="rw"><i class="radio"></i><span>读写</span><i class="radio checked"></i><span>只读</span><i class="radio"></i><span>只写</span></div>
      <i class="check"></i><span class="dde">允许DDE访问</span></div>
  </div>
  <div class="dlg-foot"><div class="button ok">确定</div><div class="button cancel">取消</div></div>
</div>
</body>
</html>
```

FILE: styles.css
```css
* { box-sizing: border-box; }
body { margin: 0; width: 2560px; height: 1600px; overflow: hidden; background: #fff; color: #222; font: 18px/26px "Open Sans", "Noto Sans CJK SC", sans-serif; position: relative; }
i, b { font-style: normal; font-weight: normal; }
ul { list-style: none; margin: 0; padding: 0; }
svg { flex: none; display: block; }
.defs { position: absolute; width: 0; height: 0; }
.app { width: 2560px; height: 1600px; display: flex; flex-direction: column; }

.titlebar { position: relative; height: 32px; flex: none; border-top: 2px solid #d4d4d4; display: flex; align-items: center; color: #858585; }
.title-icon { width: 23px; height: 21px; margin: -4px 0 0 0; }
.title-text { margin: -3px 0 0 7px; line-height: 26px; }
.numeral { font-family: "Noto Sans CJK SC", sans-serif; }
.window-buttons { margin: -4px 26px 0 auto; display: flex; gap: 54px; }
.window-buttons svg { width: 16px; height: 16px; fill: none; stroke: #8a8a8a; stroke-width: 1.2; }
.progress { position: absolute; left: 2237px; top: -2px; width: 75px; height: 13px; border: 3px solid #777; border-radius: 7px; background: #fff; padding: 1px 2px; }
.progress i { display: block; width: 28px; height: 5px; border-radius: 2px; background: #63aef0; }

.menu { height: 33px; flex: none; border-bottom: 2px solid #c9c9c9; display: flex; gap: 22px; padding: 2px 0 0 8px; color: #7d7d7d; font-size: 18px; }

.toolbar { height: 71px; flex: none; border-bottom: 3px solid #8c8c8c; display: flex; padding-top: 2px; }
.grip { width: 2px; height: 62px; margin: 0 0 0 9px; border-left: 1px solid #bbb; }
.tool { width: 67.5px; display: flex; flex-direction: column; align-items: center; padding-top: 5px; line-height: 26px; gap: 3px; }
.tool svg { width: 27px; height: 27px; }
.tool svg.wide { width: 30px; }
.tool.first { margin-left: 3px; }
.tool.on { border-left: 1px solid #999; border-top: 1px solid #999; height: 63px; }
.sep { width: 2px; height: 60px; margin-top: 3px; background: #b5b5b5; }
.s1 { margin: 3px 8px 0 9px; }
.s2 { margin: 3px 8px 0 8px; }
.s3 { margin: 3px 10px 0 8px; }
.s4 { margin: 3px 9px 0 7px; }

.body { display: flex; height: 1361px; flex: none; }
.side-tabs { width: 37px; border-left: 1px solid #aaa; padding: 8px 0 0 2px; }
.side-tab { height: 86.5px; width: 30px; border-bottom: 3px solid #999; display: flex; flex-direction: column; align-items: center; justify-content: space-between; padding: 0 0 9px; }
.side-tab span { writing-mode: vertical-rl; text-orientation: sideways; transform: rotate(180deg); line-height: 28px; height: 42px; text-align: center; }
.side-tab svg { width: 24px; height: 24px; }
.tree-panel { width: 391px; border-left: 3px solid #8c8c8c; border-right: 3px solid #8c8c8c; padding-top: 1px; }

.tree li { position: relative; }
.tree li::before { content: ""; position: absolute; left: 13px; top: 0; bottom: 0; border-left: 1px dotted #999; }
.tree > li:first-child::before { top: 15px; }
.tree li:last-child::before { bottom: auto; height: 15px; }
.tree > li:only-child::before { display: none; }
.tree ul { padding-left: 28.6px; }
.row { position: relative; display: flex; align-items: center; height: 30.07px; line-height: 24px; padding: 0 0 1px 29px; gap: 8px; white-space: nowrap; }
.row::before { content: ""; position: absolute; left: 14px; width: 15px; top: 15px; border-top: 1px dotted #999; }
.row svg { width: 24px; height: 24px; }
.dictionary .row svg { width: 22px; height: 22px; margin: 0 1px; }
.box { position: absolute; left: 7px; top: 8px; width: 13px; height: 13px; border: 1px solid #777; background: #fff; color: #111; font: 14px/10px "DejaVu Sans", sans-serif; text-align: center; }
.letters { width: 24px; height: 24px; display: flex; font: bold 12px/8px "DejaVu Sans", sans-serif; }
.letters b { width: 8px; font-weight: bold; }
.letters b:nth-child(2) { padding-top: 8px; }
.letters b:nth-child(3) { padding-top: 16px; }
.c-blue { color: #1687d0; }
.c-orange { color: #ffa11a; }

.workspace { flex: 1; min-width: 0; display: flex; flex-direction: column; }
.actions { height: 40px; flex: none; display: flex; border-bottom: 2px solid #c0c0c0; padding-left: 15px; }
.action { width: 93.3px; display: flex; gap: 10px; font-size: 20px; line-height: 35px; white-space: nowrap; }
.action svg { width: 33px; height: 37px; }
.action.search { margin-left: 223px; }
.action.search svg { width: 36px; }
.panes { flex: 1; display: flex; min-height: 0; }
.variables { width: 1894px; padding: 6px 0 0 1.5px; display: grid; grid-template-columns: repeat(16, 112.75px); grid-auto-rows: 113px; align-content: start; }
.var { display: flex; flex-direction: column; align-items: center; line-height: 26px; gap: 7px; white-space: nowrap; }
.var svg { width: 47px; height: 45px; }
.dictionary { border-left: 3px solid #8c8c8c; flex: 1; padding-top: 1px; }

.status { height: 33px; flex: none; display: flex; padding-top: 7px; }
.ready { width: 1749px; line-height: 27px; margin-top: 1px; letter-spacing: -1px; }
.cell { border-top: 2px solid #bbb; border-left: 2px solid #bbb; height: 26px; line-height: 24px; }
.c1 { width: 650px; margin-left: 4px; box-shadow: -4px 0 0 -2px #bbb; }
.c2 { width: 42px; margin-left: 2px; }
.c3 { width: 54px; margin-left: 5px; padding-left: 1px; font-size: 19px; }
.c4 { flex: 1; margin-left: 4px; }

.taskbar { height: 70px; flex: none; position: relative; display: flex; align-items: center; border-top: 2px solid #2a323c; padding: 2px 0 0 27px; background: linear-gradient(90deg, #0e151d 0, #0c1623 540px, #00105a 640px, #001058 900px, #011440 1050px, #03123f 1180px, #0b1022 1300px, #0b1026 1390px, #001052 1460px, #001050 1590px, #101420 1670px, #161615 1750px, #151617 1860px, #061727 1960px, #0d131d 2560px); }
.start { width: 36px; height: 36px; }
.searchbox { width: 330px; height: 48px; margin: -2px 19px 0 20px; border-radius: 24px; background: #343d48; border: 1px solid #4a525c; display: flex; align-items: center; padding-left: 16px; color: #e8ecf0; font-size: 21px; }
.mag { width: 24px; height: 24px; margin-right: 15px; }
.doodle { width: 72px; height: 36px; margin-left: auto; margin-right: 4px; }
.app-ic { width: 36px; height: 36px; margin-right: 30px; }
.running { width: 36px; height: 68px; margin-right: 19px; display: flex; flex-direction: column; align-items: center; gap: 6px; padding-top: 15px; }
.running svg { width: 36px; height: 36px; }
.running::after { content: ""; width: 9px; height: 5px; border-radius: 3px; background: #9ba1bf; }
.active-app { width: 58px; height: 60px; margin-top: -2px; border-radius: 6px; background: #101e55; border: 1px solid #23306a; display: flex; flex-direction: column; align-items: center; justify-content: space-between; padding-top: 14px; }
.active-app svg { width: 32px; height: 30px; }
.active-app::after { content: ""; width: 24px; height: 5px; border-radius: 3px; background: #55bdf5; }
.tray { margin-left: auto; display: flex; align-items: center; padding-right: 30px; color: #fff; }
.tray svg { fill: none; stroke: #fff; stroke-width: 2; margin-top: -4px; }
.t-up { width: 18px; height: 12px; }
.ime { font-size: 22px; margin: -5px 25px 0 27px; }
.t-wifi { width: 24px; height: 20px; }
.t-vol { width: 24px; height: 20px; margin-left: 11px; }
.t-bat { width: 26px; height: 20px; margin-left: 12px; }
.clock { margin: -2px 0 0 20px; display: flex; flex-direction: column; align-items: flex-end; line-height: 25px; font-size: 17.500px; width: 146px; white-space: nowrap; }
.watermark { position: absolute; right: 15px; bottom: 4px; color: #c4c8cd; font: 17.500px/26px "Liberation Sans", "Noto Sans CJK SC", sans-serif; white-space: nowrap; }

.dialog { position: absolute; left: 794px; top: 316px; width: 972px; height: 894px; border: 2px solid #c4c6c4; border-radius: 12px; background: #fff; box-shadow: 0 24px 34px rgba(0,0,0,.22), 0 0 18px rgba(0,0,0,.09); display: flex; flex-direction: column; }
.dlg-title { height: 50px; padding: 4px 16px 0 5px; display: flex; justify-content: space-between; color: #111; }
.dlg-title svg { width: 18px; height: 16px; margin-top: 5px; fill: none; stroke: #222; stroke-width: 1.400; }
.dlg-tabs { display: flex; height: 37px; padding-left: 11px; }
.dlg-tabs span { border-right: 2px solid #888; height: 32px; margin-top: 5px; padding: 3px 8px 0 6px; white-space: nowrap; }
.dlg-tabs span.active { height: 37px; margin-top: 2px; padding: 3px 10px 0 11px; }
.dlg-tabs span:nth-child(3) { padding-left: 8px; padding-right: 7px; }
.dlg-tabs span:nth-child(4) { padding-left: 9px; padding-right: 6px; }
.page { width: 948px; margin-left: 11px; height: 734px; border-right: 3px solid #888; border-bottom: 3px solid #888; padding-top: 16px; display: flex; flex-direction: column; }
.line { display: flex; height: 36px; line-height: 36px; white-space: nowrap; flex: none; }
.line label { width: 147px; margin-right: 14px; text-align: right; padding-top: 1px; }
.dim { color: #a0a0a0; }
.dim .field { color: #8c8c8c; }
.field { flex: none; border-left: 2px solid #8a8a8a; border-top: 3px solid #8a8a8a; height: 36px; padding-left: 4px; line-height: 29px; box-shadow: inset -1px -1px #f3f3f3; }
.combo { height: 34px; display: flex; align-items: flex-start; justify-content: space-between; border-right: 2px solid #8a8a8a; padding-right: 6px; line-height: 31px; background: linear-gradient(#8a8a8a,#8a8a8a) right bottom / 25px 2px no-repeat; }
.combo svg { width: 12px; height: 8px; margin-top: 13px; margin-left: auto; color: #111; }
.dim .combo svg, .drop-btn svg { color: #999; }
.w341 { width: 341px; } .w373 { width: 373px; } .w674 { width: 674px; } .w165 { width: 165px; } .w155 { width: 155px; } .w154 { width: 154px; } .w292 { width: 292px; } .w288 { width: 288px; } .w144 { width: 144px; }
.big-cube { width: 47px; height: 46px; margin: 4px 0 0 240px; }
.l-name { margin-bottom: 8px; }
.l-type { margin-bottom: 15px; }
.l-type label { padding-top: 2px; }
.l-desc { margin-bottom: 23px; }
.l-desc label { padding-top: 0; margin-top: -3px; }
.frame-label { width: 130px; height: 37px; margin: 0 5px 0 26px; border-left: 1px solid #bbb; border-top: 1px solid #bbb; text-align: right; padding-right: 27px; line-height: 26px; }
.frame-label.second { width: 110px; margin: 0 12px 0 17px; padding-right: 17px; }
.l-member { height: 36px; margin-bottom: 15px; }
.picker { position: relative; }
.dropdown { position: absolute; z-index: 2; left: -1px; top: 37px; width: 376px; height: 80px; background: #fff; border: 1.500px solid #555; line-height: 26px; }
.dropdown div { height: 26px; padding-left: 5px; }
.dropdown .hot { background: #0078e2; color: #fff; }
.highlight { position: absolute; z-index: 3; left: -13px; top: -10px; width: 402px; height: 136px; border: 8px solid #ed1c24; }
.cursor { position: absolute; z-index: 4; left: 241px; top: 91px; width: 18px; height: 28px; }
.ranges { display: flex; height: 135px; margin-top: 27px; }
.range-lines { width: 665px; display: flex; flex-direction: column; gap: 12px; }
.ranges .line label.wide-label { width: 127px; margin-right: 34px; padding-top: 0; }
.ranges .line label.l4 { width: 130px; margin-right: 31px; }
.ranges .line label.max-label { width: 123px; margin: 0 41px 0 0; padding-top: 0; }
.ranges .line label.m3 { width: 129px; margin-right: 35px; }
.init { margin-left: 74px; color: #222; }
.opt-open, .opt-close { color: #222; line-height: 26px; }
.radio { flex: none; width: 16px; height: 16px; border-radius: 50%; border: 2px solid; border-color: #777 #eee #eee #777; display: grid; place-items: center; margin-top: 4px; }
.radio.checked::after { content: ""; width: 5px; height: 5px; border-radius: 50%; background: currentColor; }
.open { margin-left: 38px; }
.opt-open { margin-left: 8px; }
.close { margin-left: 56px; color: #111; }
.opt-close { margin-left: 11px; }
fieldset { margin: 0; border: 2px solid #c6c6c6; padding: 0; display: flex; min-width: 0; }
legend { padding: 0 3px; line-height: 26px; }
.state { width: 172px; height: 147px; margin-top: -10px; flex-direction: column; gap: 29px; padding: 20px 0 0 25px; }
.state legend { margin-left: -16px; }
.state div { display: flex; gap: 11px; line-height: 26px; }
.check { flex: none; width: 17px; height: 17px; border-left: 2px solid #777; border-top: 2px solid #777; margin-top: 4px; }
.button { border-right: 3px solid #888; border-bottom: 3px solid #888; text-align: center; height: 44px; line-height: 43px; box-shadow: inset 1px 1px #eee; white-space: nowrap; }
.l-connect { height: 44px; margin-top: 27px; }
.connect { width: 105px; margin: 0 5px 0 51px; }
.freq { margin: 1px 47px 0 41px; }
.ms { margin: 1px 0 0 23px; }
.lower { display: flex; height: 106px; }
.regs { width: 479px; padding-top: 12px; }
.l-reg label { padding-top: 3px; }
.l-reg .field, .l-data .field { height: 34px; }
.has-btn { padding: 0; display: flex; justify-content: flex-end; }
.drop-btn { width: 26px; height: 24px; background: #ccc; border: 1px solid #eee; border-right: 2px solid #333; border-bottom: 2px solid #333; display: grid; place-items: center; }
.drop-btn svg { width: 11px; height: 7px; }
.l-data { margin-top: 18px; }
.line label.nudge { width: 151px; margin-right: 10px; }
.l-data label.nudge { padding-top: 0; margin-top: -3px; }
.convert { width: 362px; height: 91px; margin-top: 14px; padding: 4px 0 0 56px; line-height: 26px; color: #a0a0a0; }
.convert legend { margin-left: -48px; }
.convert .radio { margin-top: 16px; }
.convert span { margin: 12px 29px 0 10px; }
.convert .adv { width: 90px; margin-left: 11px; line-height: 41px; margin-top: 3px; }
.l-rw { margin-top: 10px; height: 40px; align-items: flex-start; }
.l-rw label.nudge { padding-top: 0; margin-top: -1px; }
.rw { width: 318px; display: flex; }
.l-rw .radio { margin: 11px 0 0 1px; }
.rw span { margin: 1px 31px 0 10px; }
.l-rw .check { margin-top: 9px; }
.dde { margin-left: 10px; }
.dlg-foot { display: flex; justify-content: flex-end; gap: 11px; padding: 12px 8px 0 0; color: #111; }
.ok { width: 133px; border: 2px solid #777; border-right-width: 3px; border-bottom-width: 3px; line-height: 39px; }
.cancel { width: 131px; line-height: 42px; }
```
